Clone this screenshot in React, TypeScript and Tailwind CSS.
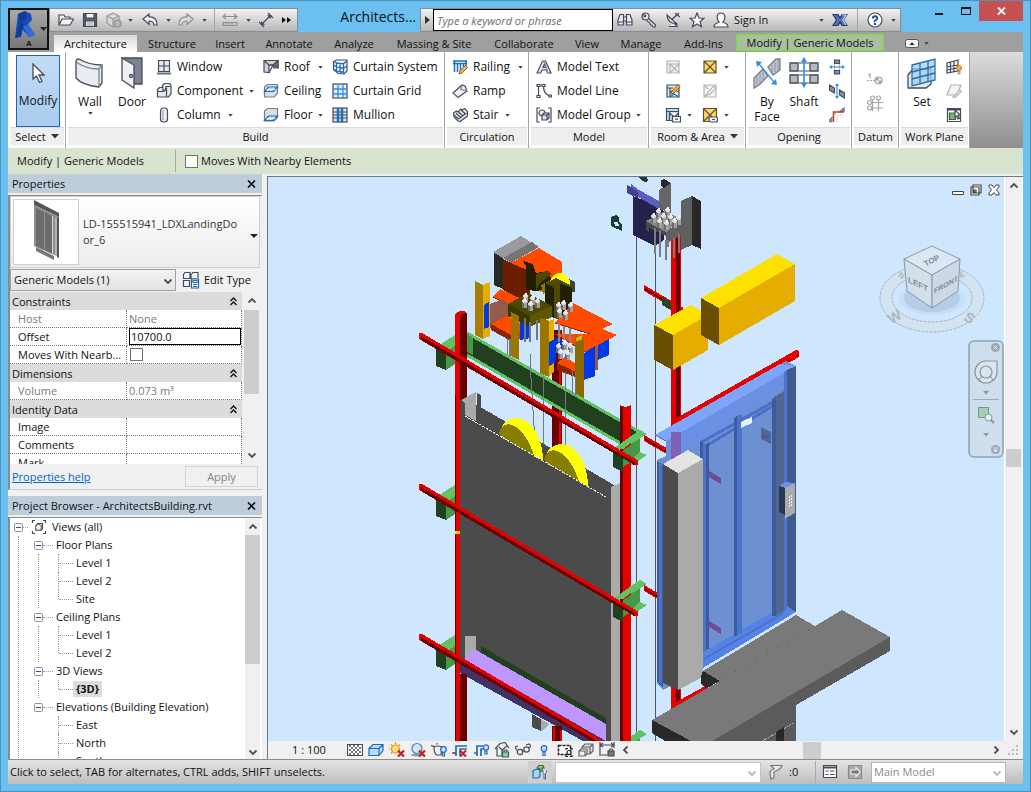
import React from "react";

type Kids = { children?: React.ReactNode };

const INK = "#454b5a";
const BLUE = "#1f6cb8";

function Svg({ size = 16, children }: Kids & { size?: number }) {
  return (
    <svg width={size} height={size} viewBox={`0 0 ${size} ${size}`} fill="none" stroke={INK} strokeWidth="1.2" className="shrink-0" aria-hidden="true">
      {children}
    </svg>
  );
}

function Caret() {
  return (
    <svg width="5" height="3" viewBox="0 0 6 4" className="shrink-0" aria-hidden="true">
      <path d="M0 0h6L3 3.5z" fill="#444" />
    </svg>
  );
}

function SoftCaret() {
  return (
    <svg width="6" height="4" viewBox="0 0 6 4" className="shrink-0" aria-hidden="true">
      <path d="M0 0h6L3 3.5z" fill="#8797a6" />
    </svg>
  );
}

const icons: Record<string, React.ReactNode> = {
  window: (
    <Svg>
      <path d="M2.5 1.5h11v11h-11zM8 1.5v11M2.5 7h11" fill="#e3e7ee" />
      <path d="M1 14.5h14" strokeWidth="2" stroke="#6b7080" />
    </Svg>
  ),
  component: (
    <Svg>
      <path d="M1.5 6.5l2-2h3v-2l2-2h4q2.500 0 2.500 2.500v8l-2.500 3h-11z" fill="#e6e9ef" />
      <path d="M1.500 8.500h5.500v-4M7 8.500q3-.5 3-5h4M10.500 5v9" />
    </Svg>
  ),
  column: (
    <Svg>
      <rect x="4.500" y="1" width="7" height="14" rx="3" fill="#eceff4" />
      <path d="M7 3v10" stroke="#9aa0ae" />
    </Svg>
  ),
  roof: (
    <Svg>
      <path d="M1 1.500h14v7l-4 .5-1-3-4 .5v7l-5-.5z" fill="#cfd3da" />
      <path d="M1 1.500l5 4.500M15 1.500L10 6 6 14M6 6h4" />
      <path d="M10 6l5-4v7z" fill="#6d7382" />
    </Svg>
  ),
  ceiling: (
    <Svg>
      <path d="M1.500 4l3-2.500h10v9L11 14H1.500z" fill="#d9dde4" stroke="#777d8b" />
      <path d="M1.500 8.500L5.500 4h9l-4 4.500z" fill="#9fd0f7" stroke={BLUE} />
      <path d="M4 8l4-3.500M7 8l4-3.500M3.500 6.500h9" stroke="#fff" strokeWidth=".7" />
    </Svg>
  ),
  floor: (
    <Svg>
      <path d="M1.500 4l3-2.500h10v9L11 14H1.500z" fill="#d9dde4" stroke="#777d8b" />
      <path d="M1.500 13.500l4-4.500h9l-4 4.500z" fill="#9fd0f7" stroke={BLUE} />
      <path d="M4 13l4-3.500M7 13l4-3.500M3.500 11.500h9" stroke="#fff" strokeWidth=".7" />
    </Svg>
  ),
  curtainSystem: (
    <Svg>
      <path d="M1.500 2.500l3-1.500h10.500v11l-3 3-6-.5-4.500-4z" fill="#fff" />
      <path d="M1.500 2.500q4 2.500 10 2v10M1.500 6q4 3 10 3M1.500 10q4 3 10 3M4.500 4v9M8 4.500v10M12 4.500l3-3M12 9l3-2" stroke={BLUE} strokeWidth="1.400" />
    </Svg>
  ),
  curtainGrid: (
    <Svg>
      <rect x="1" y="1" width="14" height="14" fill="#e4eefa" />
      <path d="M6 1v14M11 1v14M1 6h14M1 11h14" stroke="#2f8fe8" strokeWidth="1.300" />
    </Svg>
  ),
  mullion: (
    <Svg>
      <rect x="1" y="1" width="14" height="14" fill="#dbe6f2" />
      <path d="M1 5h14M1 8h14M1 11h14" />
      <path d="M6 1v14M10 1v14" stroke={BLUE} strokeWidth="2.500" />
    </Svg>
  ),
  railing: (
    <Svg>
      <path d="M1 2h14M1 4.500h14M2.500 2v11M5.500 4v9M8.500 4v8M11.500 4v4M14 2v5" stroke={BLUE} strokeWidth="1.500" />
      <path d="M7 15l1-3.500 5.500-5 2 2-5.500 5.500z" fill="#f5b23c" stroke="#7a4a10" strokeWidth=".8" />
    </Svg>
  ),
  ramp: (
    <Svg>
      <path d="M1 10L10 2l3 1 2 5-9 6.500z" fill="#eef0f4" />
      <path d="M10 2l-1 4.500 6 1.500M1 10l5 4.500" stroke="#7b8190" />
    </Svg>
  ),
  stair: (
    <Svg>
      <path d="M1.500 6l3-2 2 1 2-3 2 1 2-1.500 3 3v4.500L8 14.500 6 14l-4-4z" fill="#e8ebf0" />
      <path d="M2 8l4.500 4M4 6l4.500 4.500M6.500 5l4.500 4M9 3l4.500 4M6.500 12l8-6" />
    </Svg>
  ),
  modelText: (
    <Svg>
      <path d="M1 14L6.500 2h3L15 14h-3.500l-1-3H6l-1.500 3zM7 8.500h2.700L8.500 5z" fill="#e8ebf0" />
      <path d="M6.500 2L9 4.500 12 14" stroke="#8a90a0" />
    </Svg>
  ),
  modelLine: (
    <Svg>
      <path d="M2.500 3v10M7.500 3q0 8 6 10" />
      <path d="M1 1.500h3v2H1zM1 12.500h3v2H1zM6 1.500h3v2H6zM13 12h2.500v2H13z" fill="#fff" />
    </Svg>
  ),
  modelGroup: (
    <Svg>
      <path d="M4 1H1v14h3M12 1h3v14h-3" />
      <circle cx="6" cy="6" r="3" fill="#eceff4" />
      <path d="M6 8l2-2h5v5l-2 2H6zM6 8h5v5M11 8l2-2" fill="#dfe3ea" />
    </Svg>
  ),
  roomOff: (
    <Svg>
      <path d="M2 2h12v12H2zM2 5h12M5 5v9M5 5l9 9M14 5l-9 9" fill="#f3f3f3" stroke="#b4b4b4" />
    </Svg>
  ),
  roomPencil: (
    <Svg>
      <path d="M2 2h12v12H2zM2 5h6M5 5v9M5 9q4-3 9 0" fill="#dcebf4" />
      <path d="M6 11l1-3 6-6.500 2 2L9 10z" fill="#f5b23c" stroke="#7a4a10" strokeWidth=".8" />
      <path d="M5 14l4-3 5 3" stroke={BLUE} />
    </Svg>
  ),
  roomTag: (
    <Svg>
      <path d="M1.500 1.500h12v12h-12zM1.500 4.500h12M4.500 4.500v9M4.500 6l5 4 4-4" fill="#b9e0f2" />
      <path d="M7.500 9.500h8v5.500h-8zM10 12.200h3" fill="#fff" />
    </Svg>
  ),
  area: (
    <Svg>
      <path d="M2 2h12v12H2zM2 2l12 12M14 2L2 14" fill="#fbd96b" stroke="#5d5330" />
    </Svg>
  ),
  areaOff: (
    <Svg>
      <path d="M2 2h12v12H2zM2 2l4 4M2 14l3-3" fill="#f3f3f3" stroke="#b4b4b4" />
      <path d="M5 12l1-3 6-6 2 2-6 6z" fill="#fff" stroke="#b4b4b4" />
    </Svg>
  ),
  areaTag: (
    <Svg>
      <path d="M1.500 1.500h13v13h-13zM1.500 1.500l13 13M14.500 1.500l-13 13" fill="#fbd96b" stroke="#5d5330" />
      <rect x="7" y="10" width="8.500" height="5" rx="2" fill="#fff" />
      <path d="M10 12.500h3" />
    </Svg>
  ),
  openWall: (
    <Svg>
      <path d="M5.500 1h5v3.500h-5zM5.500 11.500h5V15h-5z" fill="#8c919d" />
      <path d="M5.500 5v6M10.500 5v6" stroke="#aaa" strokeWidth=".8" />
      <path d="M1 8h14" stroke="#2f8fe8" />
      <path d="M0 8l3-2v4zM16 8l-3-2v4z" fill="#2f8fe8" stroke="none" />
    </Svg>
  ),
  openVert: (
    <Svg>
      <path d="M0.500 2l5 3v5l-5-3zM10.500 7l5 3v5l-5-3z" fill="#8c919d" />
      <path d="M8 1v14" stroke="#2f8fe8" />
      <path d="M8 0l2 3H6zM8 16l2-3H6z" fill="#2f8fe8" stroke="none" />
    </Svg>
  ),
  dormer: (
    <Svg>
      <path d="M0 13l3-3v5H0zM10 5l4-4h2v3z" fill="#8c919d" stroke="#777d8b" strokeWidth=".8" />
      <path d="M4.500 15V5H15" stroke="#b43a2c" strokeWidth="1.500" />
      <path d="M3 10l7-7" stroke="#999" strokeWidth=".8" />
      <path d="M8 15V8h7" stroke="#b9bcc4" strokeDasharray="1 1" />
    </Svg>
  ),
  level: (
    <Svg>
      <path d="M0 9.500h9" strokeDasharray="2 1" stroke="#a6a6a6" />
      <circle cx="11.500" cy="9.500" r="3.500" fill="#eee" stroke="#a6a6a6" />
      <path d="M11.500 6v3.500H8A3.500 3.500 0 0 1 11.500 6zM11.500 13V9.500H15a3.500 3.500 0 0 1-3.500 3.500z" fill="#a6a6a6" stroke="none" />
      <path d="M1.500 4L3 3v4" stroke="#a6a6a6" />
    </Svg>
  ),
  grid: (
    <Svg>
      <path d="M5.500 5v11M11.500 5v11M5 7.500h11M5 13h11" stroke="#a6a6a6" />
      <g fill="#fff" stroke="#a6a6a6">
        <circle cx="5.500" cy="3" r="2" />
        <circle cx="11.500" cy="3" r="2" />
        <circle cx="2.500" cy="7.500" r="2" />
        <circle cx="2.500" cy="13" r="2" />
      </g>
    </Svg>
  ),
  planeShow: (
    <Svg>
      <path d="M1 4l11-3v11L1 14zM1 8l11-2M1 11l11-2M4.500 3v10M8 2v11" fill="#f2f3f6" />
      <circle cx="13" cy="9" r="2.600" fill="#fcae2e" stroke="#b06a00" strokeWidth=".7" />
      <path d="M12 12h2v3h-2z" fill="#ddd" stroke="#777" strokeWidth=".7" />
    </Svg>
  ),
  planeRef: (
    <Svg>
      <path d="M1 12L5 2h10l-4 10z" fill="#f3f3f3" stroke="#b4b4b4" />
      <path d="M7 14l7-7 1.500 1.500-6.500 6z" fill="#fff" stroke="#b4b4b4" />
    </Svg>
  ),
  planeView: (
    <Svg>
      <path d="M1.500 1.500h13v13h-13z" fill="#fff" />
      <path d="M1 2.500h14" strokeWidth="2" />
      <path d="M3.500 6h6v6.500h-6z" fill="#79b679" stroke="#2c6b34" />
      <path d="M9 3l5 5-2 .5 1.500 3-1.500.5-1.300-3-1.700 1z" fill="#fff" />
    </Svg>
  ),
  open: (
    <Svg>
      <path d="M1 13V3h5l1 2h5v2M1 13L4 7h11.500L12 13z" fill="#f4f5f7" />
    </Svg>
  ),
  save: (
    <Svg>
      <path d="M1.500 1.500h13v13h-13z" fill="#5a6070" />
      <path d="M4 1.500h8V6H4zM3.500 9h9v5.500h-9z" fill="#f4f5f7" />
      <path d="M5 11h6M5 13h6" stroke="#999" />
    </Svg>
  ),
  sync: (
    <Svg>
      <path d="M7 1l6 3v7l-6 4-6-4V4zM1 4l6 3 6-3M7 7v8" fill="#d8d8d8" stroke="#9a9a9a" />
      <circle cx="11.500" cy="11.500" r="3.500" fill="#b5b5b5" stroke="#8f8f8f" />
    </Svg>
  ),
  undo: (
    <Svg>
      <path d="M1 7l6-5v3q8-.5 8 8h-3q0-4-5-4v3.500z" fill="#f4f5f7" />
    </Svg>
  ),
  redo: (
    <Svg>
      <path d="M15 7L9 2v3q-8-.5-8 8h3q0-4 5-4v3.500z" fill="#ddd" stroke="#8f8f8f" />
    </Svg>
  ),
  measure: (
    <Svg>
      <path d="M1 4.500h14M4 2L1 4.500 4 7M12 2l3 2.500L12 7M1 10.500h14v3H1zM4 10.500v2M7 10.500v2M10 10.500v2" stroke="#8f8f8f" />
    </Svg>
  ),
  dimension: (
    <Svg>
      <path d="M4 12l8-8M1 10l5 5M10 1l5 5" />
      <path d="M3 13l.5-3.500 3 3zM13 3l-.5 3.500-3-3z" fill={INK} strokeWidth=".6" />
    </Svg>
  ),
  binoculars: (
    <Svg>
      <path d="M3 2.500h3.500V13H1V8zM13 2.500H9.500V13H15V8zM6.500 5h3v4h-3z" fill="#e8eaee" />
      <path d="M1 10h5.500M9.500 10H15" />
    </Svg>
  ),
  key: (
    <Svg>
      <path d="M7 6l7.500 7-.5 2h-2l-1-2H9.500l-.5-2L5.500 8.500" fill="#e8eaee" />
      <circle cx="4.500" cy="4.500" r="3.500" fill="#e8eaee" />
      <circle cx="3.800" cy="3.800" r="1" fill="#fff" />
    </Svg>
  ),
  dish: (
    <Svg>
      <path d="M2 3q0 8 10 9Q9 9 7 7.500T2 3zM4 14.500h8L9 11M7 7.500l4-4" fill="#e8eaee" />
      <path d="M10 1l5 4M11 4l3-3" />
    </Svg>
  ),
  star: (
    <Svg>
      <path d="M8 1l2 5 5 .3-4 3.400 1.500 5L8 12l-4.500 2.700 1.500-5-4-3.400L6 6z" fill="#f8f8f8" />
    </Svg>
  ),
  user: (
    <Svg>
      <path d="M1 15q0-3.500 5-4.500 0-1-1-2Q4 7 4.200 4.500 4.500 1 8 1t3.800 3.500Q12 7 11 8.500q-1 1-1 2 5 1 5 4.500z" fill="#f8f8f8" />
    </Svg>
  ),
  exchange: (
    <Svg>
      <path d="M1 2.500h5L8 6l2-3.500h5L11.500 8l3.500 5.500h-5L8 10l-2 3.500H1L4.500 8z" fill="#5d6fae" stroke="#26366f" />
      <path d="M10 3h4l-3 5 3 5" stroke="#cdd6ef" />
    </Svg>
  ),
  help: (
    <Svg>
      <circle cx="8" cy="8" r="7" fill="#fff" />
      <path d="M5.800 6.500q0-2.200 2.200-2.200t2.200 2q0 1.200-1.600 2T8 10" stroke="#1554a8" strokeWidth="2" />
      <path d="M7 11h2v2H7z" fill="#1554a8" stroke="none" />
    </Svg>
  ),
  editType: (
    <Svg size={18}>
      <path d="M1.500 3.500l1.500-2h5v6H1.500zM9.500 3l1.500-1.500h5V7M1.500 9.500h6v6h-6zM9 8h6M9 3v5" fill="#f4f5f7" />
      <path d="M9.500 8h7v9h-7z" fill="#fff" stroke="#2b5f92" />
      <path d="M11 9.500h4v2h-4zM11 13.500h4M11 15.500h4" stroke={BLUE} />
    </Svg>
  ),
  views: (
    <Svg>
      <path d="M4 1.500H1.500V4M12 1.500h2.500V4M4 14.500H1.500V12M12 14.500h2.500V12" />
      <path d="M5 6.500L6.500 4.500h5v5L10 11.500H5z" fill="#eee" />
      <circle cx="7.500" cy="8.500" r="3" fill="#eee" stroke="#777" />
    </Svg>
  ),
  detail: (
    <Svg>
      <path d="M.5 2.500h15v11H.5z" fill="#fff" />
      <path d="M2 4h12M2 8h12M2 12h12" strokeDasharray="2 2" strokeWidth="2" stroke="#777" />
      <path d="M4 6h10M4 10h10" strokeDasharray="2 2" strokeWidth="2" stroke="#777" />
    </Svg>
  ),
  style: (
    <Svg>
      <path d="M1 6.500l4-4h10v6l-4 5H1zM1 6.500h10v7M11 6.500l4-4" fill="#b7dcf5" stroke={BLUE} />
    </Svg>
  ),
  sunOff: (
    <Svg>
      <circle cx="6.500" cy="7" r="4" fill="#ffe27a" stroke="#d99a1c" />
      <path d="M6.500 0v2M0 7h1.500M2 2.500l1 1M11 2.500l-1 1M2 11.500l1-1" stroke="#d99a1c" />
      <path d="M9 8.500l6 6M15 8.500l-6 6" stroke="#c22020" strokeWidth="2.200" />
    </Svg>
  ),
  shadowOff: (
    <Svg>
      <ellipse cx="7" cy="13" rx="6" ry="1.500" fill="#999" stroke="none" />
      <circle cx="7" cy="6.500" r="5" fill="#cfe7f8" stroke="#4b84b8" />
      <path d="M9 8.500l6 6M15 8.500l-6 6" stroke="#c22020" strokeWidth="2.200" />
    </Svg>
  ),
  render: (
    <Svg>
      <path d="M0 3.500l3 1q0 8 3 8.500h4l1-8q-4-2-8 0M6 2.500V1" fill="#eee" />
      <circle cx="12.500" cy="7.500" r="2.800" fill="#bfe3fb" stroke={BLUE} />
      <path d="M11.500 11h2v3h-2z" fill="#fff" stroke={BLUE} />
    </Svg>
  ),
  cropOff: (
    <Svg>
      <path d="M4 14V4h11M1 11h3M8 14V7h7" stroke={BLUE} strokeWidth="1.700" />
      <path d="M8 8.500l6 6M14 8.500l-6 6" stroke="#c22020" strokeWidth="2" />
      <path d="M0 11h3" stroke="#c22020" />
    </Svg>
  ),
  cropShow: (
    <Svg>
      <path d="M4 14V4h6M1 11h3M8 14V7h2" stroke={BLUE} strokeWidth="1.700" />
      <circle cx="13" cy="5.500" r="2.600" fill="#bfe3fb" stroke={BLUE} />
      <path d="M12 9h2v3h-2z" fill="#fff" stroke={BLUE} />
    </Svg>
  ),
  lockView: (
    <Svg>
      <path d="M1 7l5-5.500 5-1L15 6M3 6v8h5V8l-3-3M8 8l5-4" fill="#eceff2" />
      <path d="M8.500 10h6v5h-6z" fill="#9ccaa8" stroke="#2f6a4a" />
      <path d="M10 10V8h3v2" />
    </Svg>
  ),
  glasses: (
    <Svg>
      <circle cx="5" cy="10" r="2.700" fill="#eef" />
      <circle cx="11.500" cy="7.500" r="2.700" fill="#eef" />
      <path d="M2.500 9L0 5l3-1M7.500 9l1.500-.5M14 6q3-2 0-4l-3 1" />
    </Svg>
  ),
  bulb: (
    <Svg>
      <circle cx="8" cy="6.500" r="2.800" fill="#bfe3fb" stroke={BLUE} />
      <path d="M7 10h2v3.500H7z" fill="#fff" stroke={BLUE} />
    </Svg>
  ),
  tempView: (
    <Svg>
      <path d="M1.500 3.500h12v9h-12z" fill="#fff" strokeDasharray="3 1" stroke="#222" strokeWidth="1.600" />
      <path d="M9 8V6.500h2M13 6.500h2V8M9 13v1.500h2M13 14.500h2V13" stroke="#222" />
      <circle cx="12" cy="10.500" r="2" fill="#fff" stroke="#222" />
    </Svg>
  ),
  boxes: (
    <Svg>
      <path d="M4 5l3-3h8v7l-3 3H4zM4 5h8v7M12 5l3-3" fill="#ddd" stroke="#666" />
      <path d="M1 9l2-2h6v5l-2 2H1zM1 9h6v5" fill="#eee" stroke="#666" />
    </Svg>
  ),
  constraint: (
    <Svg>
      <path d="M1 0v14M15 0v6M1 3h14M4 1L1 3l3 2M12 1l3 2-3 2" />
      <path d="M9 9h6v5H9z" fill="#777" />
      <path d="M10.500 9V7h3v2M2 13h6" strokeDasharray="1 0" />
    </Svg>
  ),
  worksets: (
    <Svg>
      <path d="M1 7l2-1.500h5V12l-2 2H1z" fill="#a8d4f2" stroke={BLUE} />
      <path d="M5 4l2-2.500h4L12 4h-2v3H8V5z" fill="#9fce8c" stroke="#2d6b2b" />
      <path d="M11 6.500v2l1 1V15h1.500V9.500l1-1v-2" fill="#dde5f0" stroke="#3c5a86" strokeWidth=".9" />
    </Svg>
  ),
  funnel: (
    <Svg>
      <path d="M3 1.500h11q0 2-4 4.500L6 8v5.500L3 15 2 9q0-3 4-4z" fill="#e6e6e6" stroke="#777" />
    </Svg>
  ),
  list: (
    <Svg>
      <path d="M1.500 1.500h13v12h-13z" fill="#fff" />
      <path d="M1 3.500h14" strokeWidth="2" />
      <path d="M3.500 7h3M8 7h4.500M3.500 10.500h3M8 10.500h4.500" />
    </Svg>
  ),
  exclude: (
    <Svg>
      <path d="M1.500 1.500h13v13h-13z" fill="#aaa" stroke="#8c8c8c" />
      <path d="M4 6h5V3.500L13 8l-4 4.500V10H4z" fill="#777" stroke="#eee" />
    </Svg>
  ),
};

function P({ p, f }: { p: string; f: string }) {
  return <polygon points={p} fill={f} />;
}

function Beam({ y, x2 = 638 }: { y: number; x2?: number }) {
  const rise = (x2 - 419) * 0.582;
  return (
    <g>
      <P f="#e60000" p={`419,${y - 2} 422,${y - 2} ${x2},${y + rise - 2} ${x2},${y + rise + 3} ${x2 - 3},${y + rise + 3} 419,${y + 4}`} />
      <P f="#680000" p={`421,${y + 1} ${x2 - 3},${y + rise} ${x2 - 3},${y + rise + 3} 421,${y + 5}`} />
    </g>
  );
}

function Rods({ at }: { at: number[][] }) {
  return (
    <g>
      {at.map(([x, y], i) => (
        <g key={i}>
          <rect x={x - 3} y={y + 2} width="5" height="7" fill="#a2a2a2" />
          <rect x={x - 3} y={y + 2} width="2" height="7" fill="#6a6a6a" />
          <ellipse cx={x - 0.5} cy={y + 2} rx="3" ry="1.800" fill="#dedede" />
          <rect x={x - 1} y={y - 1} width="2" height="3" fill="#f2f2f2" />
        </g>
      ))}
    </g>
  );
}

function LeftBracket({ dy }: { dy: number }) {
  return (
    <g transform={`translate(0 ${dy})`}>
      <P f="#60c262" p="436,347 455,335 455,346 446,352" />
      <P f="#204020" p="436,347 446,352 446,370 436,366" />
      <P f="#489648" p="446,352 455,346 455,364 446,370" />
    </g>
  );
}

function RightBracket({ dy }: { dy: number }) {
  return (
    <g transform={`translate(0 ${dy})`}>
      <P f="#489648" p="623,449 640,438 640,455 623,468" />
      <P f="#204020" p="613,452 623,457 623,472 613,467" />
      <P f="#60c262" p="613,449 640,430 647,434 623,449" />
      <P f="#60c262" p="623,467 640,452 647,455 623,471" />
    </g>
  );
}

function BracketFront({ dy }: { dy: number }) {
  return (
    <g transform={`translate(0 ${dy})`}>
      <P f="#60c262" p="613,449 634,434 640,436 623,449" />
      <P f="#489648" p="623,450 631,445 631,462 623,467" />
      <P f="#204020" p="613,452 623,457 623,472 613,467" />
    </g>
  );
}

function SmallBeam({ dy, end = 668 }: { dy: number; end?: number }) {
  const h = (end - 644) * 0.58;
  return (
    <g transform={`translate(0 ${dy})`}>
      <P f="#e60000" p={`644,285 ${end},${285 + h} ${end},${291 + h} 644,291`} />
      <P f="#680000" p={`645,288 ${end},${288 + h} ${end},${290 + h} 645,290`} />
    </g>
  );
}

function Wheel({ x, y }: { x: number; y: number }) {
  return (
    <g transform={`translate(${x} ${y})`}>
      <path d="M0 16Q4 1 17 0Q32 1 40 20Q44 31 44 43L36 41L10 24Z" fill="#ffff00" />
      <path d="M0 16Q1 7 10 6Q27 10 36 41Z" fill="#857e00" />
    </g>
  );
}

function Scene() {
  return (
    <svg viewBox="268 177 736 564" preserveAspectRatio="xMinYMin slice" shapeRendering="crispEdges" className="absolute inset-0 h-full w-full" role="img" aria-label="3D model of an elevator shaft">
      {/* shaft columns behind everything */}
      <P f="#e60000" p="671,230 681,230 681,708 671,712" />
      <rect x="676" y="230" width="4" height="474" fill="#680000" />
      <rect x="552" y="330" width="10" height="130" fill="#680000" />
      <rect x="559" y="330" width="2" height="130" fill="#e60000" />
      <path d="M636.500 236v505M655.500 245v496" stroke="#555" />

      {/* counterweight head */}
      <P f="#22224a" p="633,196 659,206 664,212 664,240 655,246 633,235" />
      <P f="#5e5ec0" p="631,184 639,190 659,201 659,209 638,197 631,193" />
      <P f="#43438c" p="627,185 631,187 638,192 638,198 627,193" />
      <P f="#666666" p="661,188 664,188 671,183 671,213 659,209 659,190" />
      <P f="#2a2a2a" p="661,180 664,179 671,183 664,188 661,186" />
      <P f="#606060" p="681,201 692,196 692,245 681,250" />
      <P f="#282828" p="692,196 701,201 701,249 692,245" />
      <P f="#8a8a8a" p="646,221 665,211 681,219 666,232" />
      <P f="#4a4a4a" p="646,221 666,232 666,236 649,228 649,232 646,230" />
      <P f="#606060" p="666,232 681,220 681,235 666,244" />
      <path d="M654.500 228v26M660 230v27M666 240v20M674 238v20M679 234v19M668 240v7" stroke="#7d7d7d" strokeWidth="2" />
      <Rods at={[[659, 209], [668, 208], [654, 214], [664, 214], [660, 219], [671, 215], [679, 216], [667, 221], [675, 219]]} />
      <P f="#173c3c" p="611,217 616,215 619,217 619,222 622,224 622,231 611,226" />
      <P f="#cfe6ff" p="614,222 618,222 619,226 615,226" />
      <P f="#173c3c" p="639,176 647,176 648,181 645,182 640,179" />

      <SmallBeam dy={0} end={683} />
      <P f="#204a24" p="662,297 671,302 671,310 662,305" />
      <rect x="671" y="285" width="10" height="50" fill="#e60000" />
      <rect x="676" y="285" width="4" height="50" fill="#680000" />
      <P f="#ffe100" p="654,325 691,305 708,315 673,335" />
      <P f="#6a4f00" p="654,325 673,335 673,370 654,360" />
      <P f="#e5ad00" p="673,335 708,315 708,350 673,370" />
      <P f="#ffe100" p="701,298 777,254 795,264 719,308" />
      <P f="#6a4f00" p="701,298 719,308 719,345 701,335" />
      <P f="#e5ad00" p="719,308 795,264 795,301 719,345" />

      {/* machine */}
      <P f="#282828" p="494,253 503,257 503,289 494,285" />
      <P f="#9a9a9a" p="493,252 521,236 539,247 511,263" />
      <P f="#757575" p="503,258 532,242 539,247 511,263" />
      <P f="#6b1d00" p="503,259 511,263 530,270 530,298 522,300 503,290" />
      <P f="#ff4a00" p="511,263 539,248 562,262 562,282 540,292 527,270" />
      <P f="#3f3f3f" p="562,276 575,282 575,292 562,290" />
      <P f="#ff4a00" p="492,297 500,289 524,300 512,306" />
      <path d="M493 297l18 9" stroke="#7c2200" />
      <P f="#955b4a" p="489,304 504,299 510,306 510,322 489,328" />
      <P f="#ff4a00" p="491,324 507,316 526,326 526,330 511,336" />
      <P f="#8b2700" p="491,324 511,335 511,341 491,330" />
      <P f="#d93e00" p="511,335 526,328 526,338 511,341" />
      <P f="#a87e00" p="475,281 483,285 483,339 475,335" />
      <P f="#e5ad00" p="483,285 490,282 490,336 483,339" />
      <P f="#0038e8" p="484,305 489,302 489,327 484,329" />
      <P f="#222000" p="523,261 532,264 534,269 526,266" />
      <P f="#222000" p="526,266 533,264 536,273 548,271 552,281 546,288 537,291 526,290" />
      <P f="#4d4900" p="536,274 548,271 552,274 540,283 536,291" />
      <circle cx="560" cy="283" r="10" fill="#ffff00" />
      <P f="#857e00" p="541,285 549,281 551,290 543,294" />
      <P f="#222000" p="545,283 554,283 554,318 545,314" />
      <P f="#4d4900" p="546,283 556,278 572,286 572,288 561,284 554,288" />
      <P f="#4d4900" p="554,286 560,283 560,320 554,318" />
      <P f="#222000" p="560,284 572,288 572,325 560,322" />
      <P f="#0038e8" p="520,315 530,320 530,338 520,340" />
      <P f="#3a3700" p="508,304 530,316 530,327 508,316" />
      <P f="#4d4900" p="508,304 528,293 552,306 530,316" />
      <P f="#5c5700" p="530,316 552,306 552,317 530,327" />
      <P f="#9c7500" p="511,312 519,316 519,360 511,356" />
      <path d="M507.500 338v24M510 339v22M525 318v24M530 322v20M537 320v20" stroke="#777" strokeWidth="1.500" />
      <Rods at={[[526, 294], [533, 296], [538, 299], [525, 299], [531, 302]]} />
      <P f="#ff4a00" p="555,323 573,303 613,324 590,334" />
      <P f="#ff4a00" p="555,334 590,334 600,328 617,335 587,353" />
      <path d="M555 323l35 11M555 334l32 19" stroke="#9b2b00" />
      <P f="#0038e8" p="555,337 563,341 563,350 555,350" />
      <P f="#0038e8" p="584,353 595,346 595,376 584,380" />
      <P f="#0038e8" p="598,345 609,339 609,355 598,360" />
      <rect x="595" y="346" width="3" height="24" fill="#955b4a" />
      <P f="#ff4a00" p="557,363 565,357 583,368 583,377 570,372" />
      <P f="#8b2700" p="557,363 583,375 583,380 557,370" />
      <P f="#9c7500" p="540,318 549,321 549,377 540,374" />
      <P f="#e5ad00" p="549,321 554,319 554,372 549,376" />
      <P f="#0038e8" p="549,342 556,339 556,362 549,366" />
      <Rods at={[[559, 303], [564, 301], [571, 303], [560, 309], [566, 311], [559, 344], [565, 341], [571, 344], [561, 350], [568, 351]]} />
      <path d="M559 324v18M564 326v14M570 328v15" stroke="#888" strokeWidth="1.500" />
      <P f="#8b6800" p="575,335 584,338 584,398 575,394" />
      <P f="#e5ad00" p="576,338 582,335 582,340 576,341" />

      {/* green cross beam */}
      <P f="#204020" p="467,332 640,431 640,454 467,355" />
      <path d="M467 333l173 99M467 355l155 89" stroke="#60c262" strokeWidth="3" fill="none" />
      <P f="#489648" p="467,334 473,338 473,355 467,352" />
      <path d="M530.500 354v24M543.500 376v84M565.500 372v76M572.500 370v24M575.500 372v24M531 378l5 80" stroke="#777" fill="none" />

      <P f="#e60000" p="455,314 460,311 465,311 467,314 467,410 455,410" />
      <P f="#680000" p="460,315 467,313 467,410 460,410" />

      {/* car panel */}
      <P f="#4b4b4b" p="460,400 477,405 614,485 614,741 606,741 460,654" />
      <Wheel x={499} y={418} />
      <Wheel x={544} y={444} />
      <P f="#4b4b4b" p="460,413 606,497 606,640 460,640" />
      <P f="#4b4b4b" p="477,393 481,395 481,410 477,406" />
      <P f="#aaaaaa" p="461,400 476,392 476,421 465,415 465,404" />
      <path d="M465 416l141 81" stroke="#e8e8e8" strokeDasharray="3 1" />
      <P f="#aaaaaa" p="611,487 620,483 620,741 611,741" />
      <P f="#4b4b4b" p="460,630 606,630 611,640 611,741 606,741 460,664" />
      <rect x="465" y="636" width="11" height="22" fill="#aaaaaa" />
      <P f="#204020" p="481,646 606,718 606,727 481,654" />
      <P f="#bf96ff" p="465,656 476,650 606,724 606,741 465,660" />
      <P f="#413266" p="460,660 606,741 583,741 460,673" />
      <path d="M460 675L583 743L455 743L455 675Z" fill="#cfe6ff" />
      <P f="#4b4b4b" p="532,714 541,719 541,731 532,727" />
      <P f="#aaaaaa" p="541,719 549,724 545,729 541,731" />
      <rect x="552" y="726" width="10" height="15" fill="#680000" />
      <path d="M554 727v14M561 731v10" stroke="#e60000" strokeWidth="2" />
      <rect x="455" y="395" width="5" height="346" fill="#e60000" />
      <rect x="455" y="395" width="1" height="346" fill="#680000" />
      <rect x="460" y="674" width="7" height="67" fill="#680000" />
      <rect x="455" y="531" width="5" height="3" fill="#ffe100" />

      <RightBracket dy={0} />
      <RightBracket dy={150} />
      <RightBracket dy={300} />
      <P f="#e60000" p="620,405 625,407 631,405 631,741 620,741" />
      <rect x="620" y="407" width="3" height="334" fill="#680000" />
      <BracketFront dy={0} />
      <BracketFront dy={150} />

      <LeftBracket dy={0} />
      <LeftBracket dy={150} />
      <LeftBracket dy={300} />
      <Beam y={335} />
      <Beam y={486} />
      <Beam y={636} />
      <rect x="611" y="743" width="20" height="8" fill="#e60000" />
      <SmallBeam dy={150} end={671} />
      <SmallBeam dy={300} end={658} />

      {/* landing door */}
      <P f="#e60000" p="673,420 796,350 799,351 799,357 675,427 673,424" />
      <path d="M675 425L799 355" stroke="#b40000" />
      <P f="#6c90d2" p="655,435 786,361 796,366 796,612 703,668 663,690 657,684 657,460 666,456 666,441" />
      <P f="#7da5fa" p="655,435 780,364 796,366 666,441" />
      <P f="#6b8fe2" p="666,441 796,366 796,380 700,443 684,452 666,460" />
      <rect x="671" y="432" width="10" height="30" fill="#7f60b4" />
      <path d="M700 443L784 396M706 446L796 392" stroke="#4b70c8" strokeWidth="3" />
      <P f="#3f5b9c" p="657,461 663,465 663,688 657,682" />
      <rect x="659" y="463" width="3" height="220" fill="#4b73cc" />
      <P f="#3f5b9c" p="700,441 703,443 703,665 700,667" />
      <P f="#4b73cc" p="703,443 706,444 706,660 703,665" />
      <P f="#3f5b9c" p="706,444 709,442 709,658 706,662" />
      <P f="#5582e5" p="703,652 783,606 796,610 784,619 703,668" />
      <path d="M704 659L784 613" stroke="#4b73cc" strokeWidth="2" />
      <P f="#3f5b9c" p="734,418 737,416 737,636 734,636" />
      <P f="#4b73cc" p="737,416 742,414 742,633 737,636" />
      <P f="#3f5b9c" p="772,399 776,396 776,616 772,616" />
      <P f="#4f6690" p="776,396 784,391 784,611 776,616" />
      <P f="#4b73cc" p="784,372 787,370 787,609 784,611" />
      <P f="#3f5a92" p="787,370 796,366 796,612 787,606" />
      <path d="M655 435L666 441" stroke="#4b73cc" />
      <P f="#e8eef8" p="741,422 752,417 752,423 741,428" />
      <P f="#4a6d94" p="761,427 771,432 771,444 761,439" />
      <P f="#704a88" p="762,434 770,435 768,438 762,438" />
      <P f="#724b90" p="709,471 721,478 721,484 709,477" />
      <P f="#724b90" p="709,621 721,628 721,634 709,627" />
      <P f="#6b8fe2" p="779,486 785,482 795,483 785,488" />
      <P f="#2a3854" p="779,486 785,488 785,515 779,512" />
      <P f="#aaaaaa" p="785,488 795,483 795,513 785,519" />
      <path d="M789.500 496v11M791.500 495v11" stroke="#f2f2f2" strokeDasharray="2 1" />

      <P f="#e4e4e4" p="663,464 688,450 703,459 678,473" />
      <P f="#4b4b4b" p="663,464 678,473 678,690 663,683" />
      <P f="#aaaaaa" p="678,473 703,459 703,677 678,690" />
      <P f="#e60000" p="671,705 707,685 709,689 671,710" />

      {/* floor slab */}
      <P f="#797979" p="652,720 720,681 703,671 796,615 815,626 842,610 890,637 712,741 690,741" />
      <P f="#282828" p="652,720 652,733 665,741 691,741" />
      <P f="#5b5b5b" p="712,741 890,637 890,651 796,705 796,741" />
      <P f="#282828" p="703,671 720,681 707,688 701,684 701,677" />
      <path d="M725 677.500L815 626" stroke="#555" strokeDasharray="1 11" />
      <path d="M763 741L796 721" stroke="#bbb" strokeDasharray="1 1" />
      <P f="#282828" p="776,732 784,727 784,741 776,741" />

      {/* view cube */}
      <g shapeRendering="auto">
        <ellipse cx="932" cy="298" rx="46" ry="29" fill="none" stroke="#d3e3f0" strokeWidth="11" />
        <g fill="none" stroke="#a3b4c2" strokeDasharray="3 1">
          <ellipse cx="932" cy="298" rx="52" ry="34" />
          <ellipse cx="932" cy="298" rx="40" ry="24" />
        </g>
        <ellipse cx="932" cy="299" rx="33" ry="16" fill="#a7bdd2" opacity=".2" />
        <ellipse cx="932" cy="298" rx="28" ry="14" fill="#98afc6" opacity=".35" />
        <g stroke="#8a99a8" strokeLinejoin="round">
          <path d="M904 259l28-13 28 13-28 16z" fill="#dbe8f3" />
          <path d="M904 259l28 16v33l-25-17z" fill="#d3dfe9" />
          <path d="M932 275l28-16-2 32-26 17z" fill="#ccd8e3" />
        </g>
        <g fill="#7e8c9a" fontFamily="Liberation Sans, sans-serif" fontWeight="bold" textAnchor="middle">
          <text fontSize="8" transform="translate(933 263) rotate(-28)">TOP</text>
          <text fontSize="8" transform="translate(918 287) skewY(25)">LEFT</text>
          <text fontSize="7" transform="translate(946 287) skewY(-28)">FRONT</text>
          <text fontSize="14" fill="#a9b7c3" transform="translate(897 321) rotate(-30)">W</text>
          <text fontSize="14" fill="#a9b7c3" transform="translate(967 322) rotate(30)">S</text>
          <text fontSize="8" fill="#a9b7c3" transform="translate(900 278) rotate(30)">N</text>
          <text fontSize="8" fill="#a9b7c3" transform="translate(963 277) rotate(-30)">E</text>
        </g>
      </g>
    </svg>
  );
}

function Chevron({ dir }: { dir: "up" | "down" | "left" | "right" }) {
  const d = { up: "M1.500 6.500l3.500-3.500 3.500 3.500", down: "M1.500 3.500l3.500 3.500 3.500-3.500", left: "M6.500 1.500L3 5l3.500 3.500", right: "M3.500 1.500L7 5l-3.500 3.500" }[dir];
  return (
    <svg width="10" height="10" viewBox="0 0 10 10" className="shrink-0" aria-hidden="true">
      <path d={d} fill="none" stroke="#505050" strokeWidth="1.800" />
    </svg>
  );
}

function Tool({ icon, label, caret, push }: { icon: string; label: string; caret?: boolean; push?: boolean }) {
  return (
    <button type="button" className="flex h-6 w-full items-center gap-[5px] whitespace-nowrap text-left">
      {icons[icon]}
      <span className={push ? "flex-1" : ""}>{label}</span>
      {caret && (
        <span className={push ? "" : "pl-[2px]"}>
          <Caret />
        </span>
      )}
    </button>
  );
}

function IconTool({ icon, label, caret }: { icon: string; label: string; caret?: boolean }) {
  return (
    <button type="button" aria-label={label} className="flex h-6 items-center gap-[6px]">
      {icons[icon]}
      {caret && <Caret />}
    </button>
  );
}

function Panel({ title, width, caret, children }: Kids & { title: string; width: string; caret?: boolean }) {
  return (
    <section className={`flex shrink-0 flex-col border-r border-[#a6a6a6] bg-white pb-[3px] pr-px ${width}`}>
      <div className="flex flex-1 pt-[3px]">{children}</div>
      <h2 className="ml-[2px] flex h-[18px] items-center justify-center gap-[5px] whitespace-nowrap border-t border-[#d9d9d9] bg-[#eeeeee] text-[11px]">
        {title}
        {caret && (
          <svg width="8" height="5" viewBox="0 0 8 5" aria-hidden="true">
            <path d="M0 0h8L4 4.500z" fill="#333" />
          </svg>
        )}
      </h2>
    </section>
  );
}

function Big({ label, width, caret, children }: Kids & { label: string; width: string; caret?: boolean }) {
  return (
    <button type="button" className={`flex shrink-0 flex-col items-center gap-[3px] self-start pt-[2px] leading-[15px] ${width}`}>
      {children}
      <span>{label}</span>
      {caret && <Caret />}
    </button>
  );
}

function BigSvg({ children }: Kids) {
  return (
    <svg width="32" height="34" viewBox="0 0 32 34" fill="none" stroke={INK} strokeWidth="1.300" aria-hidden="true">
      {children}
    </svg>
  );
}

const tabs: [string, string][] = [
  ["Structure", "w-[70px]"],
  ["Insert", "w-[46px]"],
  ["Annotate", "w-[72px]"],
  ["Analyze", "w-[58px]"],
  ["Massing & Site", "w-[102px]"],
  ["Collaborate", "w-[78px]"],
  ["View", "w-[48px]"],
  ["Manage", "w-[60px]"],
  ["Add-Ins", "w-[65px]"],
];

function Header() {
  return (
    <header className="flex h-[51px] shrink-0">
      <div className="flex w-[41px] shrink-0 flex-col pt-[7px]">
        <button type="button" aria-label="Application menu" className="h-[42px] border-2 border-[#111] bg-gradient-to-b from-[#a9a9a9] to-[#777777]">
          <svg width="37" height="38" viewBox="0 0 37 38" aria-hidden="true">
            <path d="M8 4l7-3 6 3 1 6-4 4 7 11-6 2-7-8-1 8-6 1z" fill="#1749b8" />
            <path d="M8 4l7-3 1 8-6 3zM5 28l5-16 4 2-3 12z" fill="#123a94" />
            <path d="M13 17l5-3 7 11-6 2z" fill="#2f6be0" />
            <path d="M30 17h7l-3.500 4z" fill="#222" />
            <text x="19" y="36" fontSize="8" fontWeight="bold" fontFamily="Liberation Sans, sans-serif" textAnchor="middle" fill="#111">A</text>
          </svg>
        </button>
        <div className="flex-1 bg-[#9f9f9f]" />
      </div>
      <div className="flex min-w-0 flex-1 flex-col">
        <div className="flex h-[31px] shrink-0">
          <div role="toolbar" aria-label="Quick access" className="mt-[7px] flex h-[24px] w-[249px] shrink-0 items-center border border-[#8b8b8b] bg-gradient-to-b from-[#f3f3f3] to-[#b8b8b8] pl-2">
            <button type="button" aria-label="Open" className="w-6">{icons.open}</button>
            <button type="button" aria-label="Save" className="w-6">{icons.save}</button>
            <button type="button" aria-label="Synchronize" className="flex w-9 items-center gap-[6px]">{icons.sync}<Caret /></button>
            <button type="button" aria-label="Undo" className="flex w-9 items-center gap-[8px]">{icons.undo}<Caret /></button>
            <button type="button" aria-label="Redo" className="flex w-9 items-center gap-[8px]">{icons.redo}<Caret /></button>
            <span className="mr-[7px] h-full w-px bg-[#a5a5a5]" />
            <button type="button" aria-label="Measure" className="flex w-9 items-center gap-[8px]">{icons.measure}<Caret /></button>
            <button type="button" aria-label="Aligned dimension" className="w-6">{icons.dimension}</button>
            <button type="button" aria-label="More">
              <svg width="9" height="6" viewBox="0 0 9 6" aria-hidden="true"><path d="M0 0l4 3-4 3zM5 0l4 3-4 3z" fill="#111" /></svg>
            </button>
          </div>
          <h1 className="flex-1 whitespace-nowrap pr-1 pt-[6px] text-right text-[14px] leading-[20px]">Architects...</h1>
          <div className="mt-[7px] flex h-[24px] w-[481px] shrink-0 items-center border border-[#8b8b8b] bg-gradient-to-b from-[#f3f3f3] to-[#b8b8b8]">
            <span className="flex w-[12px] justify-center">
              <svg width="5" height="8" viewBox="0 0 5 8" aria-hidden="true"><path d="M0 0l5 4-5 4z" fill="#333" /></svg>
            </span>
            <input aria-label="Search help" placeholder="Type a keyword or phrase" className="h-[22px] w-[180px] border border-black bg-white px-[3px] text-[11px] italic placeholder:text-[#6d6d6d]" />
            <div className="flex gap-2 pl-1">
              <button type="button" aria-label="Search">{icons.binoculars}</button>
              <button type="button" aria-label="Subscription">{icons.key}</button>
              <button type="button" aria-label="Communication center">{icons.dish}</button>
              <button type="button" aria-label="Favorites">{icons.star}</button>
            </div>
            <button type="button" className="ml-[8px] flex w-[111px] items-center gap-[5px] text-[11px]">
              {icons.user}
              <span className="flex-1 text-left">Sign In</span>
              <Caret />
            </button>
            <button type="button" aria-label="Exchange apps" className="ml-[8px]">{icons.exchange}</button>
            <span className="mx-[9px] h-full w-px bg-[#a5a5a5]" />
            <button type="button" aria-label="Help" className="flex items-center gap-[8px]">{icons.help}<Caret /></button>
          </div>
          <div className="flex w-[122px] shrink-0 justify-end">
            <button type="button" aria-label="Minimize" className="flex h-5 w-[27px] items-center justify-center">
              <svg width="10" height="10" viewBox="0 0 10 10" aria-hidden="true"><path d="M1 7h8v2H1z" fill="#111" /></svg>
            </button>
            <button type="button" aria-label="Maximize" className="flex h-5 w-[27px] items-center justify-center">
              <svg width="10" height="8" viewBox="0 0 10 8" aria-hidden="true"><path d="M.5 .5h9v7h-9z" fill="none" stroke="#111" /><path d="M0 1h10" stroke="#111" strokeWidth="2" /></svg>
            </button>
            <button type="button" aria-label="Close" className="flex h-5 w-[44px] items-center justify-center bg-[#c75050]">
              <svg width="9" height="8" viewBox="0 0 9 8" aria-hidden="true"><path d="M1 .5l7 7M8 .5l-7 7" stroke="#fff" strokeWidth="1.800" /></svg>
            </button>
          </div>
        </div>
        <nav role="tablist" className="flex h-5 flex-1 items-end bg-[#9f9f9f] pl-[5px] text-[11px]">
          <button type="button" role="tab" aria-selected="true" className="h-[17px] w-[83px] bg-gradient-to-b from-[#d8d8d8] to-white">Architecture</button>
          {tabs.map(([t, w]) => (
            <button key={t} type="button" role="tab" className={`h-[17px] whitespace-nowrap ${w}`}>{t}</button>
          ))}
          <button type="button" role="tab" className="mb-px flex h-[17px] w-[148px] items-center justify-center whitespace-nowrap border border-[#62f01c] bg-[#a9bf9e]">Modify | Generic Models</button>
          <button type="button" aria-label="Minimize ribbon" className="ml-[21px] flex h-[17px] items-center gap-[5px]">
            <svg width="14" height="9" viewBox="0 0 14 9" aria-hidden="true">
              <rect x=".5" y=".5" width="13" height="8" rx="2" fill="#f4f4f4" stroke="#555" />
              <path d="M4.500 6h5L7 3z" fill="#333" />
            </svg>
            <Caret />
          </button>
        </nav>
      </div>
    </header>
  );
}

function Ribbon() {
  return (
    <div className="flex h-24 shrink-0 bg-gradient-to-b from-[#dcdcdc] to-[#8f8f8f] text-[12px]">
      <Panel title="Select" width="w-[58px]" caret>
        <button type="button" className="ml-2 flex h-[72px] w-[44px] shrink-0 flex-col items-center border border-[#1c67bd] bg-gradient-to-b from-[#c3dcf5] to-[#a9cbee] pt-[7px]">
          <svg width="13" height="21" viewBox="0 0 13 21" aria-hidden="true">
            <path d="M1 1v15l3.500-3 3 6.500 2.500-1-3-6.500h5z" fill="#fff" stroke={INK} strokeWidth="1.300" />
          </svg>
          <span className="pt-[9px] leading-4">Modify</span>
        </button>
      </Panel>
      <Panel title="Build" width="w-[379px]">
        <div className="flex shrink-0 gap-[6px] pl-[6px]">
          <Big label="Wall" width="w-[36px]" caret>
            <BigSvg>
              <path d="M2 5q0-3 3-3 10 6 23 6v18l-3 4Q8 28 2 21z" fill="#e9ecf1" />
              <path d="M2 5q10 7 23 7l3-4M25 12v18" stroke="#7b8190" />
            </BigSvg>
          </Big>
          <Big label="Door" width="w-[36px]">
            <BigSvg>
              <path d="M6 1h20v26h-8z" fill="#7c8290" />
              <path d="M6 1l12 7v23L6 23z" fill="#eef0f4" />
              <circle cx="15" cy="19" r="1.500" />
            </BigSvg>
          </Big>
        </div>
        <div className="ml-[6px] w-[98px] shrink-0">
          <Tool icon="window" label="Window" />
          <Tool icon="component" label="Component" push caret />
          <Tool icon="column" label="Column" caret />
        </div>
        <div className="ml-[9px] w-[60px] shrink-0">
          <Tool icon="roof" label="Roof" push caret />
          <Tool icon="ceiling" label="Ceiling" />
          <Tool icon="floor" label="Floor" push caret />
        </div>
        <div className="ml-[9px] w-[108px] shrink-0">
          <Tool icon="curtainSystem" label="Curtain System" />
          <Tool icon="curtainGrid" label="Curtain Grid" />
          <Tool icon="mullion" label="Mullion" />
        </div>
      </Panel>
      <Panel title="Circulation" width="w-[84px]">
        <div className="ml-[7px] w-[71px] shrink-0">
          <Tool icon="railing" label="Railing" push caret />
          <Tool icon="ramp" label="Ramp" />
          <Tool icon="stair" label="Stair" caret />
        </div>
      </Panel>
      <Panel title="Model" width="w-[120px]">
        <div className="ml-[7px] w-[105px] shrink-0">
          <Tool icon="modelText" label="Model Text" />
          <Tool icon="modelLine" label="Model Line" />
          <Tool icon="modelGroup" label="Model Group" push caret />
        </div>
      </Panel>
      <Panel title="Room & Area" width="w-[97px]" caret>
        <div className="ml-4 w-[37px]">
          <IconTool icon="roomOff" label="Room" />
          <IconTool icon="roomPencil" label="Room separator" />
          <IconTool icon="roomTag" label="Tag room" caret />
        </div>
        <div>
          <IconTool icon="area" label="Area" caret />
          <IconTool icon="areaOff" label="Area boundary" />
          <IconTool icon="areaTag" label="Tag area" caret />
        </div>
      </Panel>
      <Panel title="Opening" width="w-[106px]">
        <div className="flex shrink-0 pl-[2px]">
          <Big label="By Face" width="w-[38px]">
            <BigSvg>
              <path d="M3 31V21l9-9 5 7-9 9zM17 10l8-8h4v11l-7 5z" fill="#c2c6cf" stroke="#777d8b" />
              <path d="M6 19v9M9 16v10M12 14v9M21 8v8M24 5v10M27 3v11" stroke="#8d929d" strokeWidth="1" />
              <path d="M8 7l15 18" stroke="#2f8fe8" />
              <path d="M5 4l6 1-5 5zM26 28l-6-1 5-5z" fill="#2f8fe8" stroke="none" />
            </BigSvg>
          </Big>
          <Big label="Shaft" width="w-[36px]">
            <BigSvg>
              <path d="M2 6h8v8H2zM22 6h8v8h-8zM2 18h8v8H2zM22 18h8v8h-8z" fill="#b5b9c2" />
              <path d="M10 6h12M10 14h12M10 18h12M10 26h12" stroke="#888" />
              <path d="M16 3v25" stroke="#2f8fe8" strokeWidth="1.600" />
              <path d="M16 0l3 5h-6zM16 31l3-5h-6z" fill="#2f8fe8" stroke="none" />
            </BigSvg>
          </Big>
        </div>
        <div className="ml-[7px]">
          <IconTool icon="openWall" label="Wall opening" />
          <IconTool icon="openVert" label="Vertical opening" />
          <IconTool icon="dormer" label="Dormer" />
        </div>
      </Panel>
      <Panel title="Datum" width="w-[47px]">
        <div className="pl-[15px] pt-3">
          <IconTool icon="level" label="Level" />
          <IconTool icon="grid" label="Grid" />
        </div>
      </Panel>
      <Panel title="Work Plane" width="w-[71px]">
        <div className="flex shrink-0 pl-[5px]">
          <Big label="Set" width="w-[36px]">
            <BigSvg>
              <path d="M2 18l5-6h18v15L20 31H2z" fill="#dfe9f2" />
              <path d="M6 8l23-6v21L6 29zM6 15l23-6M6 22l23-6M14 6v21M22 4v21" fill="#9fcdf2" fillOpacity=".75" stroke="#2c6da8" />
            </BigSvg>
          </Big>
        </div>
        <div className="ml-[6px]">
          <IconTool icon="planeShow" label="Show" />
          <IconTool icon="planeRef" label="Reference plane" />
          <IconTool icon="planeView" label="Viewer" />
        </div>
      </Panel>
    </div>
  );
}

function PaneTitle({ children }: Kids) {
  return (
    <div className="flex h-[19px] shrink-0 items-center justify-between bg-[#bfcddb] pl-1 pr-[6px]">
      <h2>{children}</h2>
      <button type="button" aria-label="Close pane">
        <svg width="9" height="8" viewBox="0 0 9 8" aria-hidden="true"><path d="M1 .5l7 7M8 .5l-7 7" stroke="#111" strokeWidth="1.700" /></svg>
      </button>
    </div>
  );
}

function Group({ children }: Kids) {
  return (
    <tr>
      <th colSpan={2} scope="colgroup" className="h-[18px] bg-[#dcdcdc] p-0 pl-[2px] text-left font-normal leading-[17px]">
        <div className="flex items-center justify-between pr-[5px]">
          {children}
          <svg width="7" height="9" viewBox="0 0 7 9" aria-hidden="true"><path d="M.5 4l3-3 3 3M.5 8l3-3 3 3" fill="none" stroke="#111" strokeWidth="1.400" /></svg>
        </div>
      </th>
    </tr>
  );
}

function Row({ name, dim, children }: Kids & { name: string; dim?: boolean }) {
  return (
    <tr className={dim ? "text-[#7a7a7a]" : ""}>
      <th scope="row" className="h-[18px] overflow-hidden whitespace-nowrap border-b border-r border-dotted border-[#777] p-0 pl-2 text-left font-normal leading-[17px]">{name}</th>
      <td className="h-[18px] border-b border-r border-dotted border-[#777] p-0 pl-[2px] leading-[17px]">{children}</td>
    </tr>
  );
}

function Properties() {
  return (
    <section className="flex h-[316px] shrink-0 flex-col">
      <PaneTitle>Properties</PaneTitle>
      <div className="mt-[2px] flex min-h-0 flex-1 flex-col border-b border-l-2 border-t border-b-[#ccc] border-l-[#8a8a8a] border-t-[#8a8a8a]">
        <button type="button" className="mr-[2px] flex h-[72px] shrink-0 items-center border border-[#cfcfcf] bg-gradient-to-b from-white to-[#ececec] pl-[2px] pr-px text-left">
          <span className="flex h-[66px] w-[66px] shrink-0 border border-[#cfcfcf] bg-white">
            <svg width="64" height="64" viewBox="0 0 64 64" aria-hidden="true">
              <path d="M20 0l25 13v4L20 5z" fill="#555" />
              <path d="M20 5l25 12v40L20 46z" fill="#8f8f8f" />
              <path d="M22 8l8 4v38l-8-4zM31 12l7 4v38l-7-4z" fill="#6c6c6c" />
              <path d="M38.500 16v38M42 18v38" stroke="#d8d8d8" />
              <path d="M45 16v42l-2-1V18z" fill="#555" />
              <path d="M22 47l18 9v4L22 51z" fill="#777" />
            </svg>
          </span>
          <span className="flex-1 whitespace-nowrap pl-1 leading-4 text-[#333]">
            LD-155515941_LDXLandingDo
            <br />
            or_6
          </span>
          <svg width="8" height="4" viewBox="0 0 8 4" className="mt-2" aria-hidden="true"><path d="M0 0h8L4 4z" fill="#222" /></svg>
        </button>
        <div className="flex h-[24px] shrink-0 items-center">
          <label className="relative flex">
            <select aria-label="Element filter" className="h-[22px] w-[166px] appearance-none border border-[#a0a0a0] bg-gradient-to-b from-[#f2f2f2] to-[#e4e4e4] pl-[3px]">
              <option>Generic Models (1)</option>
            </select>
            <span className="pointer-events-none absolute right-[3px] top-[7px]"><Chevron dir="down" /></span>
          </label>
          <button type="button" className="ml-[6px] flex items-center gap-1">{icons.editType}Edit Type</button>
        </div>
        <div className="flex min-h-0 flex-1">
          <div className="min-w-0 flex-1 overflow-hidden bg-white">
            <table className="w-full table-fixed border-separate border-spacing-0">
              <colgroup>
                <col className="w-[117px]" />
                <col />
              </colgroup>
              <tbody>
                <Group>Constraints</Group>
                <Row name="Host" dim>None</Row>
                <Row name="Offset">
                  <input aria-label="Offset" defaultValue="10700.0" className="block h-[17px] w-full border border-black bg-white pl-px" />
                </Row>
                <Row name="Moves With Nearb...">
                  <input type="checkbox" aria-label="Moves With Nearby Elements" className="ml-px block h-[13px] w-[13px] appearance-none border border-[#707070] bg-white" />
                </Row>
                <Group>Dimensions</Group>
                <Row name="Volume" dim>0.073 m³</Row>
                <Group>Identity Data</Group>
                <Row name="Image" />
                <Row name="Comments" />
                <Row name="Mark" />
              </tbody>
            </table>
          </div>
          <div className="mr-[3px] flex w-[17px] flex-col items-center bg-[#f0f0f0] pl-[2px]">
            <span className="flex h-[18px] items-center"><Chevron dir="up" /></span>
            <span className="h-[84px] w-full bg-[#cdcdcd]" />
            <span className="mt-auto flex h-[18px] items-center"><Chevron dir="down" /></span>
          </div>
        </div>
        <div className="flex h-[25px] shrink-0 items-center justify-between pl-[2px] pr-1">
          <a href="#help" className="text-[#0066cc] underline">Properties help</a>
          <button type="button" disabled className="h-[21px] w-[73px] border border-[#d4d4d4] text-[#838383]">Apply</button>
        </div>
      </div>
    </section>
  );
}

function Expander() {
  return (
    <svg width="9" height="9" viewBox="0 0 9 9" className="shrink-0" aria-hidden="true">
      <rect x=".5" y=".5" width="8" height="8" rx="1" fill="#fafafa" stroke="#919191" />
      <path d="M2 4.500h5" stroke="#2e4f9e" />
    </svg>
  );
}

function Branch({ label, leaves, last }: { label: string; leaves: string[]; last?: boolean }) {
  return (
    <li>
      <div className="flex h-[18px] items-center">
        <Expander />
        <span className="mr-[3px] w-[10px] border-t border-dotted border-[#999]" />
        {label}
      </div>
      <ul className={last ? "ml-1 border-l border-transparent pl-[19px]" : "ml-1 border-l border-dotted border-[#999] pl-[19px]"}>
        {leaves.map((leaf, i) => (
          <li key={leaf} className="flex h-[18px] items-center">
            <span className={!last && i === leaves.length - 1 ? "h-[9px] w-px self-start border-l border-dotted border-[#999]" : "h-full w-px border-l border-dotted border-[#999]"} />
            <span className="w-[14px] border-t border-dotted border-[#999]" />
            <span className={leaf === "{3D}" ? "bg-[#dcdcdc] px-[3px] font-bold" : "px-[3px]"}>{leaf}</span>
          </li>
        ))}
      </ul>
    </li>
  );
}

function Browser() {
  return (
    <section className="flex min-h-0 flex-1 flex-col pt-[6px]">
      <PaneTitle>Project Browser - ArchitectsBuilding.rvt</PaneTitle>
      <div className="mt-[2px] flex min-h-0 flex-1 border-l-2 border-t border-[#8a8a8a] bg-white">
        <div className="min-w-0 flex-1 overflow-hidden pl-1">
          <div className="flex h-[18px] items-center">
            <Expander />
            <span className="mr-[3px] w-[5px] border-t border-dotted border-[#999]" />
            {icons.views}
            <span className="pl-[5px]">Views (all)</span>
          </div>
          <ul className="ml-1 border-l border-dotted border-[#999] pl-[15px]">
            <Branch label="Floor Plans" leaves={["Level 1", "Level 2", "Site"]} />
            <Branch label="Ceiling Plans" leaves={["Level 1", "Level 2"]} />
            <Branch label="3D Views" leaves={["{3D}"]} />
            <Branch label="Elevations (Building Elevation)" leaves={["East", "North", "South"]} last />
          </ul>
        </div>
        <div className="mr-[2px] flex w-[15px] flex-col items-center bg-[#f0f0f0]">
          <span className="flex h-[17px] items-center"><Chevron dir="up" /></span>
          <span className="h-[129px] w-full bg-[#cdcdcd]" />
          <span className="mt-auto flex h-[15px] items-center"><Chevron dir="down" /></span>
        </div>
      </div>
    </section>
  );
}

const viewTools: [string, string][] = [
  ["detail", "Detail level"],
  ["style", "Visual style"],
  ["sunOff", "Sun path off"],
  ["shadowOff", "Shadows off"],
  ["render", "Render"],
  ["cropOff", "Crop view off"],
  ["cropShow", "Show crop region"],
  ["lockView", "Lock view"],
  ["glasses", "Temporary hide"],
  ["bulb", "Reveal hidden"],
  ["tempView", "Temporary view"],
  ["boxes", "Displacement"],
  ["constraint", "Reveal constraints"],
];

function Grip() {
  return (
    <svg width="12" height="12" viewBox="0 0 12 12" className="shrink-0" aria-hidden="true">
      <path d="M9 1h2v2H9zM5 5h2v2H5zM9 5h2v2H9zM1 9h2v2H1zM5 9h2v2H5zM9 9h2v2H9z" fill="#bdbdbd" />
    </svg>
  );
}

function Viewport() {
  return (
    <section className="mt-[2px] flex min-w-0 flex-1 flex-col border-l border-t border-[#6e7783]">
      <div className="flex min-h-0 flex-1">
        <div className="relative min-w-0 flex-1 overflow-hidden bg-[#cfe6ff]">
          <Scene />
          <div className="absolute right-1 top-[7px] flex gap-[6px]">
            <button type="button" aria-label="Minimize view">
              <svg width="12" height="12" viewBox="0 0 12 12" aria-hidden="true"><path d="M.5 7.500h11v3H.5z" fill="#fff" stroke="#444" /></svg>
            </button>
            <button type="button" aria-label="Restore view">
              <svg width="12" height="12" viewBox="0 0 12 12" fill="#fff" stroke="#444" strokeWidth="1.200" aria-hidden="true"><path d="M3 1h8v8H3zM1 3h8v8H1zM4 6h2v2H4z" /></svg>
            </button>
            <button type="button" aria-label="Close view">
              <svg width="12" height="12" viewBox="0 0 12 12" aria-hidden="true"><path d="M1 1h3l2 2.500L8 1h3v2L8.500 6 11 9v2H8L6 8.500 4 11H1V9l2.500-3L1 3z" fill="#fff" stroke="#444" /></svg>
            </button>
          </div>
          <div className="absolute right-0 top-[163px] flex h-[118px] w-[36px] flex-col items-center rounded-md border-2 border-[#9cb1c4] bg-[#cddeed]">
            <svg width="9" height="9" viewBox="0 0 9 9" className="mr-[2px] mt-px self-end" aria-hidden="true"><circle cx="4.500" cy="4.500" r="4.500" fill="#98a8b6" /><path d="M2.500 2.500l4 4M6.500 2.500l-4 4" stroke="#eef" /></svg>
            <button type="button" aria-label="Steering wheel" className="mt-[8px] flex flex-col items-center gap-[7px]">
              <svg width="24" height="24" viewBox="0 0 24 24" fill="#dde5ec" stroke="#8797a6" strokeWidth="1.200" aria-hidden="true"><path d="M12 1h11v11a11 11 0 1 1-11-11z" /><circle cx="12" cy="12" r="6" /><path d="M5 20l3-4M19 20l-3-4" /></svg>
              <SoftCaret />
            </button>
            <span className="mt-[4px] h-px w-[26px] bg-[#9aabba]" />
            <button type="button" aria-label="Zoom" className="mt-[6px] flex flex-col items-center gap-[9px]">
              <svg width="18" height="18" viewBox="0 0 18 18" aria-hidden="true"><path d="M1.500 1.500h10v10h-10z" fill="#a9cdb0" stroke="#6f9c7c" /><circle cx="11.500" cy="11.500" r="3.500" fill="#e8f0f6" stroke="#8797a6" /><path d="M14 14l3 3" stroke="#8797a6" strokeWidth="2" /></svg>
              <SoftCaret />
            </button>
            <svg width="9" height="9" viewBox="0 0 9 9" className="mb-[2px] mr-[2px] mt-auto self-end" aria-hidden="true"><circle cx="4.500" cy="4.500" r="4.500" fill="#98a8b6" /><path d="M2 3h5M2.500 5h4L4.500 7z" stroke="#eef" fill="#eef" strokeWidth=".8" /></svg>
          </div>
        </div>
        <div className="flex w-[19px] shrink-0 flex-col items-center border-x border-white bg-[#f0f0f0]">
          <span className="flex h-[18px] items-center"><Chevron dir="up" /></span>
          <span className="mt-auto h-[18px] w-[15px] bg-[#cdcdcd]" />
          <span className="h-[256px]" />
          <span className="flex h-[18px] items-center"><Chevron dir="down" /></span>
        </div>
      </div>
      <div className="flex h-[18px] shrink-0 items-center bg-[#f0f0f0] pl-6">
        <button type="button" className="w-[55px] text-left">1 : 100</button>
        <div className="flex gap-[5px]">
          {viewTools.map(([icon, label]) => (
            <button key={icon} type="button" aria-label={label}>{icons[icon]}</button>
          ))}
        </div>
        <span className="ml-[6px]"><Chevron dir="left" /></span>
        <div className="flex flex-1 justify-end self-stretch pt-px">
          <span className="mr-[170px] w-[18px] bg-[#cdcdcd]" />
        </div>
        <Chevron dir="right" />
        <span className="ml-[6px] mr-1"><Grip /></span>
      </div>
    </section>
  );
}

function StatusBar() {
  return (
    <footer className="flex h-[25px] shrink-0 items-center border-t border-[#8c8c8c] bg-gradient-to-b from-[#e4e4e4] to-[#bdbdbd]">
      <p className="flex-1 whitespace-nowrap pl-[2px]">Click to select, TAB for alternates, CTRL adds, SHIFT unselects.</p>
      <button type="button" aria-label="Worksets" className="flex h-[22px] w-[24px] items-center justify-center bg-[#cfcfcf]">{icons.worksets}</button>
      <label className="relative ml-[3px] flex">
        <select aria-label="Active workset" className="h-[21px] w-[206px] appearance-none border border-[#c4c4c4] bg-white" />
        <span className="pointer-events-none absolute right-1 top-[6px] opacity-40"><Chevron dir="down" /></span>
      </label>
      <span className="ml-[7px] flex w-[47px] items-center gap-[5px]">{icons.funnel}:0</span>
      <button type="button" aria-label="Design options" className="flex h-[22px] w-[28px] items-center justify-center border-l border-[#aaa]">{icons.list}</button>
      <button type="button" aria-label="Exclude options" className="flex h-[22px] w-[24px] items-center justify-center">{icons.exclude}</button>
      <label className="relative ml-1 flex">
        <select aria-label="Design option" className="h-[21px] w-[135px] appearance-none border border-[#b5b5b5] bg-white pl-[2px] text-[#8a8a8a]">
          <option>Main Model</option>
        </select>
        <span className="pointer-events-none absolute right-1 top-[6px] opacity-40"><Chevron dir="down" /></span>
      </label>
      <span className="ml-1 mr-px self-end"><Grip /></span>
    </footer>
  );
}

export default function App() {
  return (
    <div className="flex h-screen w-full flex-col overflow-hidden border border-[#4c92bb] bg-[#69c0f1] px-[7px] pb-[7px] font-['Open_Sans','Noto_Sans',sans-serif] text-[11px] leading-4 text-[#111]">
      <Header />
      <Ribbon />
      <div className="flex h-[26px] shrink-0 items-center bg-[#d8e4cf]">
        <span className="w-[168px] border-r border-[#a4ab9e] pl-[9px] leading-[22px]">Modify | Generic Models</span>
        <label className="flex items-center gap-[3px] pl-[9px]">
          <input type="checkbox" className="h-[13px] w-[13px] appearance-none border border-[#707070] bg-white" />
          Moves With Nearby Elements
        </label>
      </div>
      <main className="flex min-h-0 flex-1 bg-[#f0f0f0]">
        <aside className="mr-[5px] flex w-[254px] shrink-0 flex-col">
          <Properties />
          <Browser />
        </aside>
        <Viewport />
      </main>
      <StatusBar />
    </div>
  );
}
